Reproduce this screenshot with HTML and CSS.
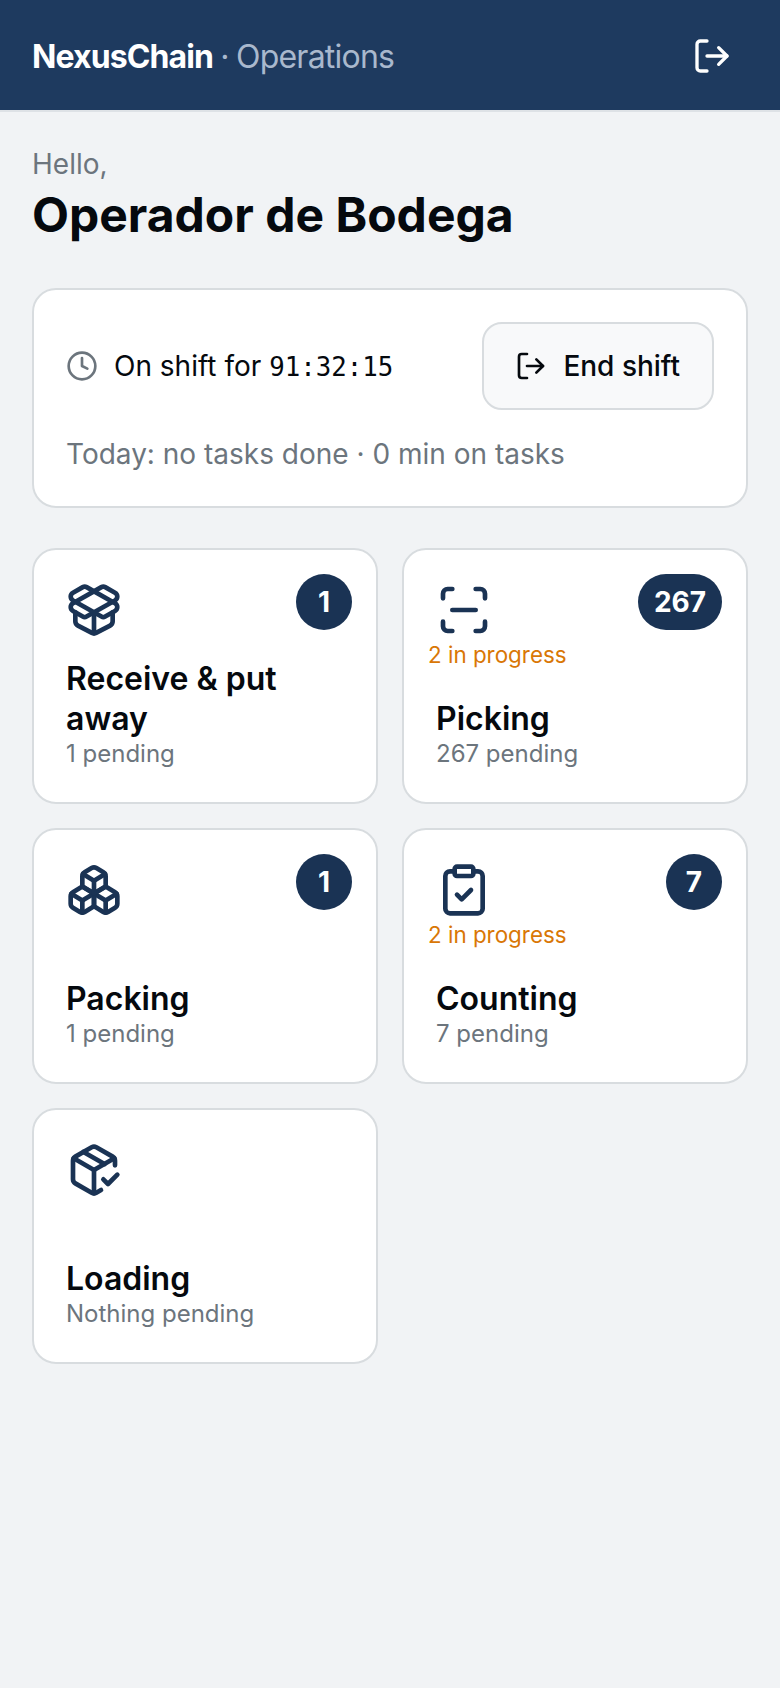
FILE: index.html
```html
<!DOCTYPE html>
<html lang="en">

<head>
    <meta charset="UTF-8">
    <meta name="viewport" content="width=device-width, initial-scale=1.0">
    <title>NexusChain Operations</title>
    <link rel="stylesheet" href="styles.css">
</head>

<body>
    <header class="topbar">
        <div class="brand"><strong>NexusChain</strong> <span class="brand-dot">·</span> <span class="brand-sub">Operations</span></div>
        <button class="logout" aria-label="Log out">
            <svg class="icon icon-logout" viewBox="0 0 24 24"><path d="m16 17 5-5-5-5"/><path d="M21 12H9"/><path d="M9 21H5a2 2 0 0 1-2-2V5a2 2 0 0 1 2-2h4"/></svg>
        </button>
    </header>

    <main class="content">
        <p class="hello">Hello,</p>
        <h1 class="name">Operador de Bodega</h1>

        <section class="shift">
            <div class="shift-row">
                <div class="shift-time">
                    <svg class="icon icon-clock" viewBox="0 0 24 24"><circle cx="12" cy="12" r="10"/><polyline points="12 6 12 12 16 14"/></svg>
                    <span>On shift for <span class="timer">91:32:15</span></span>
                </div>
                <button class="end-shift">
                    <svg class="icon icon-end" viewBox="0 0 24 24"><path d="m16 17 5-5-5-5"/><path d="M21 12H9"/><path d="M9 21H5a2 2 0 0 1-2-2V5a2 2 0 0 1 2-2h4"/></svg>
                    End shift
                </button>
            </div>
            <p class="shift-summary">Today: no tasks done · 0 min on tasks</p>
        </section>

        <section class="tiles">
            <a class="tile">
                <span class="badge">1</span>
                <svg class="icon tile-icon" viewBox="0 0 24 24"><path d="M12 22v-9"/><path d="M15.17 2.21a1.67 1.67 0 0 1 1.63 0L21 4.57a1.93 1.93 0 0 1 0 3.36L8.82 14.79a1.655 1.655 0 0 1-1.64 0L3 12.43a1.93 1.93 0 0 1 0-3.36z"/><path d="M20 13v3.87a2.06 2.06 0 0 1-1.11 1.83l-6 3.08a1.93 1.93 0 0 1-1.78 0l-6-3.08A2.06 2.06 0 0 1 4 16.87V13"/><path d="M21 12.43a1.93 1.93 0 0 0 0-3.36L8.83 2.2a1.64 1.64 0 0 0-1.63 0L3 4.57a1.93 1.93 0 0 0 0 3.36l12.18 6.86a1.636 1.636 0 0 0 1.63 0z"/></svg>
                <div class="tile-text">
                    <div class="tile-title">Receive &amp; put away</div>
                    <div class="tile-sub">1 pending</div>
                </div>
            </a>

            <a class="tile">
                <span class="badge">267</span>
                <span class="progress">2 in progress</span>
                <svg class="icon tile-icon" viewBox="0 0 24 24"><path d="M3 7V5a2 2 0 0 1 2-2h2"/><path d="M17 3h2a2 2 0 0 1 2 2v2"/><path d="M21 17v2a2 2 0 0 1-2 2h-2"/><path d="M7 21H5a2 2 0 0 1-2-2v-2"/><path d="M7 12h10"/></svg>
                <div class="tile-text">
                    <div class="tile-title">Picking</div>
                    <div class="tile-sub">267 pending</div>
                </div>
            </a>

            <a class="tile">
                <span class="badge">1</span>
                <svg class="icon tile-icon" viewBox="0 0 24 24"><path d="M2.97 12.92A2 2 0 0 0 2 14.63v3.24a2 2 0 0 0 .97 1.71l3 1.8a2 2 0 0 0 2.06 0L12 19v-5.5l-5-3-4.03 2.42Z"/><path d="m7 16.5-4.74-2.85"/><path d="m7 16.5 5-3"/><path d="M7 16.5v5.17"/><path d="M12 13.5V19l3.97 2.38a2 2 0 0 0 2.06 0l3-1.8a2 2 0 0 0 .97-1.71v-3.24a2 2 0 0 0-.97-1.71L17 10.5l-5 3Z"/><path d="m17 16.5-5-3"/><path d="m17 16.5 4.74-2.85"/><path d="M17 16.5v5.17"/><path d="M7.97 4.42A2 2 0 0 0 7 6.13v4.37l5 3 5-3V6.13a2 2 0 0 0-.97-1.71l-3-1.8a2 2 0 0 0-2.06 0l-3 1.8Z"/><path d="M12 8 7.26 5.15"/><path d="m12 8 4.74-2.85"/><path d="M12 13.5V8"/></svg>
                <div class="tile-text">
                    <div class="tile-title">Packing</div>
                    <div class="tile-sub">1 pending</div>
                </div>
            </a>

            <a class="tile">
                <span class="badge">7</span>
                <span class="progress">2 in progress</span>
                <svg class="icon tile-icon" viewBox="0 0 24 24"><rect width="8" height="4" x="8" y="2" rx="1" ry="1"/><path d="M16 4h2a2 2 0 0 1 2 2v14a2 2 0 0 1-2 2H6a2 2 0 0 1-2-2V6a2 2 0 0 1 2-2h2"/><path d="m9 14 2 2 4-4"/></svg>
                <div class="tile-text">
                    <div class="tile-title">Counting</div>
                    <div class="tile-sub">7 pending</div>
                </div>
            </a>

            <a class="tile">
                <svg class="icon tile-icon" viewBox="0 0 24 24"><path d="m16 16 2 2 4-4"/><path d="M21 10V8a2 2 0 0 0-1-1.73l-7-4a2 2 0 0 0-2 0l-7 4A2 2 0 0 0 3 8v8a2 2 0 0 0 1 1.73l7 4a2 2 0 0 0 2 0l2-1.14"/><path d="m7.5 4.27 9 5.15"/><polyline points="3.29 7 12 12 20.71 7"/><line x1="12" x2="12" y1="22" y2="12"/></svg>
                <div class="tile-text">
                    <div class="tile-title">Loading</div>
                    <div class="tile-sub">Nothing pending</div>
                </div>
            </a>
        </section>
    </main>
</body>

</html>
```

FILE: styles.css
```css
* {
    box-sizing: border-box;
}

body {
    margin: 0;
    min-height: 100vh;
    background-color: #f1f3f5;
    color: #05090e;
    font-family: Inter, "Liberation Sans", sans-serif;
    font-size: 28px;
    line-height: 1.5;
}

.icon {
    display: block;
    flex: none;
    fill: none;
    stroke: currentColor;
    stroke-width: 2;
    stroke-linecap: round;
    stroke-linejoin: round;
}

.topbar {
    display: flex;
    align-items: center;
    justify-content: space-between;
    height: 112px;
    padding: 0 48px 0 32px;
    background-color: #1e3a5f;
    border-bottom: 2px solid #dee2e6;
}

.brand {
    padding-top: 3px;
    color: #a9b8cd;
    font-size: 32px;
    letter-spacing: -0.024em;
    word-spacing: -1px;
}

.brand strong {
    font-weight: 700;
    letter-spacing: -0.028em;
    color: #ffffff;
}

.logout {
    padding: 2px 0 0;
    border: none;
    background: none;
    color: #ffffff;
}

.icon-logout {
    width: 40px;
    height: 40px;
}

.content {
    padding: 31px 32px 32px;
}

.hello {
    margin: 0 0 1px;
    color: #6c757d;
}

.name {
    margin: 0 0 44px;
    font-size: 48px;
    font-weight: 700;
    line-height: 1.2;
}

.shift {
    margin-bottom: 40px;
    padding: 32px 32px 31px;
    background-color: #ffffff;
    border: 2px solid #d8dcdf;
    border-radius: 24px;
}

.shift-row {
    display: flex;
    align-items: center;
    justify-content: space-between;
}

.shift-time {
    display: flex;
    align-items: center;
    gap: 16px;
}

.icon-clock {
    width: 32px;
    height: 32px;
    color: #6c757d;
}

.timer {
    font-family: "DejaVu Sans Mono", monospace;
    font-size: 25.76px;
}

.end-shift {
    display: flex;
    align-items: center;
    gap: 16px;
    min-height: 88px;
    padding: 0 32px 0 31px;
    background-color: #f8f9fa;
    border: 2px solid #d8dcdf;
    border-radius: 20px;
    color: inherit;
    font: inherit;
    font-weight: 500;
}

.icon-end {
    width: 32px;
    height: 32px;
}

.shift-summary {
    margin: 23px 0 0;
    color: #6c757d;
}

.tiles {
    display: grid;
    grid-template-columns: 1fr 1fr;
    gap: 24px;
}

.tile {
    position: relative;
    display: flex;
    flex-direction: column;
    min-height: 256px;
    padding: 32px 32px 34px;
    background-color: #ffffff;
    border: 2px solid #d8dcdf;
    border-radius: 24px;
}

.tile-icon {
    width: 56px;
    height: 56px;
    color: #1a3354;
}

.tile-text {
    margin-top: auto;
}

.tile-title {
    font-size: 32px;
    font-weight: 600;
    line-height: 40px;
}

.tile-sub {
    color: #6c757d;
    font-size: 24px;
    line-height: 29px;
}

.badge {
    position: absolute;
    top: 24px;
    right: 24px;
    min-width: 56px;
    height: 56px;
    padding: 0 16px;
    background-color: #1a3354;
    border-radius: 28px;
    color: #ffffff;
    font-weight: 700;
    line-height: 56px;
    text-align: center;
}

.progress {
    position: absolute;
    top: 88px;
    left: 24px;
    color: #d97706;
    font-size: 22.4px;
}
```
